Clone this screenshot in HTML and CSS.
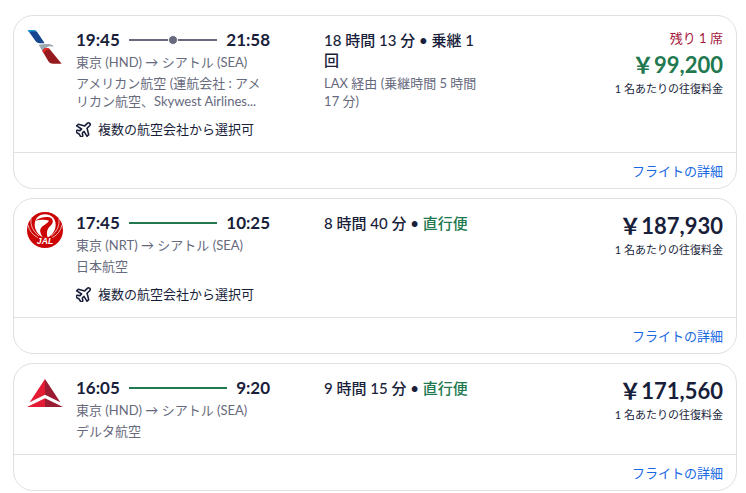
FILE: index.html
```html
<!DOCTYPE html>
<html lang="ja">
<head>
  <meta charset="UTF-8" />
  <meta name="viewport" content="width=device-width, initial-scale=1.0">
  <title>フライト検索結果</title>
  <link rel="stylesheet" href="styles.css">
</head>
<body>

  <svg width="0" height="0" class="defs" aria-hidden="true">
    <symbol id="plane" viewBox="0 0 24 24">
      <path transform="rotate(-45 12 12)" d="M16 9.5h5.500a2.500 2.500 0 0 1 0 5H16L11 23H7.500L9.500 14.500H6L3.500 18H0L1.500 12 0 6h3.500L6 9.500h3.500L7.500 1H11z" fill="none" stroke="currentColor" stroke-width="2.400" stroke-linejoin="round" />
    </symbol>
  </svg>

  <main class="results">

    <article class="card">
      <div class="card-body">
        <svg class="logo" viewBox="0 0 108 108" aria-hidden="true">
          <path d="M2 3H20Q28 4 32 11L53 43H39Q30 43 26 37Z" fill="#16468f" />
          <path d="M2 3H20Q26 4 29 8Q18 5 5 8Z" fill="#1c9ad6" />
          <path d="M35 47Q50 44 66 45Q79 47 79 53Q67 50 60 55L46 66Z" fill="#9da9b1" />
          <path d="M46 66Q50 56 62 57Q68 59 72 65L104 104H78Q69 104 65 98Z" fill="#961b1e" />
          <path d="M46 66Q50 56 62 57Q67 58 70 62Q57 59 50 73Z" fill="#e22b25" />
        </svg>
        <div class="info">
          <div class="trip">
            <div class="times">
              <span>19:45</span>
              <span class="line has-stop"><i class="dot"></i></span>
              <span>21:58</span>
            </div>
            <div class="route">東京 (HND) → シアトル (SEA)</div>
            <div class="airline">アメリカン航空 (運航会社 : アメリカン航空、Skywest Airlines...</div>
            <div class="note"><svg class="plane" aria-hidden="true"><use href="#plane" /></svg>複数の航空会社から選択可</div>
          </div>
          <div class="stops">
            <div class="duration">18 時間 13 分 • 乗継 1<br>回</div>
            <div class="via">LAX 経由 (乗継時間 5 時間<br>17 分)</div>
          </div>
          <div class="fare">
            <div class="seats">残り 1 席</div>
            <div class="price deal">￥99,200</div>
            <div class="per">1 名あたりの往復料金</div>
          </div>
        </div>
      </div>
      <div class="card-footer"><a href="#">フライトの詳細</a></div>
    </article>

    <article class="card">
      <div class="card-body">
        <svg class="logo" viewBox="0 0 108 108" aria-hidden="true">
          <circle cx="54" cy="54" r="54" fill="#cc0303" />
          <path d="M54 7C35 7 23 20 23 38C23 54 33 67 47 76H63C77 67 86 54 86 38C86 20 73 7 54 7Z" fill="#fff" />
          <path d="M23 26C38 19 52 13 67 16C80 20 80 32 72 40C61 50 57 60 62 77H48C40 65 37 56 42 48C48 39 62 35 66 26C56 22 42 23 23 26Z" fill="#cc0303" />
          <g fill="none" stroke="#fff" stroke-width="2">
            <path d="M12 20Q8 50 36 72M3 38Q8 64 32 77M96 20Q100 50 73 72M105 38Q100 64 76 77" />
          </g>
          <text class="jal" x="54" y="95" text-anchor="middle">JAL</text>
        </svg>
        <div class="info">
          <div class="trip">
            <div class="times">
              <span>17:45</span>
              <span class="line"></span>
              <span>10:25</span>
            </div>
            <div class="route">東京 (NRT) → シアトル (SEA)</div>
            <div class="airline">日本航空</div>
            <div class="note"><svg class="plane" aria-hidden="true"><use href="#plane" /></svg>複数の航空会社から選択可</div>
          </div>
          <div class="stops">
            <div class="duration">8 時間 40 分 • <span class="direct">直行便</span></div>
          </div>
          <div class="fare">
            <div class="price">￥187,930</div>
            <div class="per">1 名あたりの往復料金</div>
          </div>
        </div>
      </div>
      <div class="card-footer"><a href="#">フライトの詳細</a></div>
    </article>

    <article class="card">
      <div class="card-body">
        <svg class="logo" viewBox="0 0 108 108" aria-hidden="true">
          <path d="M54 6L54 53L8 76Z" fill="#e31b35" />
          <path d="M54 6L100 76L54 53Z" fill="#9b1b32" />
          <path d="M54 64L54 90L0 90Z" fill="#e31b35" />
          <path d="M54 64L108 90H54Z" fill="#9b1b32" />
        </svg>
        <div class="info">
          <div class="trip">
            <div class="times">
              <span>16:05</span>
              <span class="line"></span>
              <span>9:20</span>
            </div>
            <div class="route">東京 (HND) → シアトル (SEA)</div>
            <div class="airline">デルタ航空</div>
          </div>
          <div class="stops">
            <div class="duration">9 時間 15 分 • <span class="direct">直行便</span></div>
          </div>
          <div class="fare">
            <div class="price">￥171,560</div>
            <div class="per">1 名あたりの往復料金</div>
          </div>
        </div>
      </div>
      <div class="card-footer"><a href="#">フライトの詳細</a></div>
    </article>

  </main>

</body>
</html>
```
FILE: styles.css
```css
* { box-sizing: border-box; }
body {
  margin: 0; background-color: #fff; color: #191e3b;
  font-family: Lato, "Noto Sans CJK JP", sans-serif;
  font-size: 13px; line-height: 18px;
}
.defs { position: absolute; }
.results { display: flex; flex-direction: column; gap: 9px; padding: 15px 9px 0 13px; }

.card { border: 1px solid #dfe0e4; border-radius: 20px; }
.card-body { display: flex; gap: 13px; padding: 13px 13px 14px; }
.card-footer {
  border-top: 1px solid #dfe0e4; padding: 9px 13px 8px;
  text-align: right;
}
.card-footer a { color: #1668e3; text-decoration: none; }

.logo { width: 36px; height: 36px; flex: none; }
.jal { font: italic bold 26px "Liberation Sans", sans-serif; fill: #fff; }
.info { flex: 1; display: grid; grid-template-columns: 30% 25% 1fr; column-gap: 54px; }

.times { display: flex; align-items: center; font-size: 17px; font-weight: bold; line-height: 22px; }
.line {
  flex: 1; height: 2px; margin: 0 9px; background-color: #227950;
  display: flex; align-items: center; justify-content: center;
}
.line.has-stop { background-color: #676a7d; }
.dot {
  width: 10px; height: 10px; flex: none; border-radius: 50%;
  background-color: #676a7d; border: 1px solid #fff;
}
.route, .airline, .via { color: #676a7d; }
.route { margin-top: 2px; }
.airline { margin-top: 3px; }
.note { display: flex; align-items: center; gap: 6px; margin-top: 10px; }
.plane { width: 16px; height: 16px; overflow: visible; }

.stops { white-space: nowrap; }
.duration { font-size: 15px; font-weight: 500; line-height: 20px; padding-top: 1px; }
.direct { color: #227950; }
.via { margin-top: 4px; }

.fare { text-align: right; white-space: nowrap; }
.seats { color: #a7183c; margin-bottom: 4px; }
.price { font-size: 22px; font-weight: bold; line-height: 28px; }
.deal { color: #227950; }
.per { font-size: 11px; line-height: 16px; margin-top: 2px; }
```
